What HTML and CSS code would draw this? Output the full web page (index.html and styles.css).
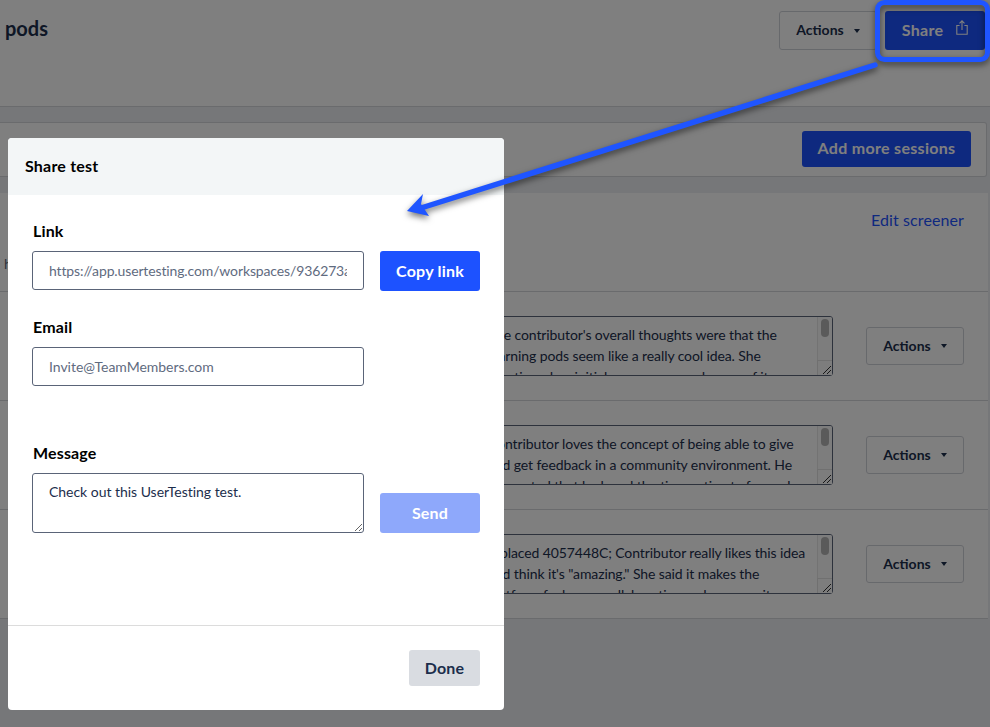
FILE: index.html
```html
<!DOCTYPE html>
<html lang="en">
<head>
<meta charset="utf-8">
<title>Share test</title>
<link rel="stylesheet" href="styles.css">
</head>
<body>
<div class="page">
  <header class="topbar">
    <h1 class="title">pods</h1>
    <div class="top-actions">
      <button class="btn btn-outline btn-actions-top">Actions <span class="caret"></span></button>
      <button class="btn btn-primary btn-share">Share
        <svg class="share-icon" viewBox="0 0 12 15" width="12" height="15" fill="none" stroke="currentColor" stroke-width="1.1"><path d="M3.6 5.5H.8v8.7h10.4V5.5H8.4"/><path d="M6 10V1M3.5 3.4 6 .9l2.5 2.5"/></svg>
      </button>
    </div>
  </header>
  <section class="card">
    <button class="btn btn-primary btn-add">Add more sessions</button>
  </section>
  <section class="panel">
    <div class="panel-head">
      <span class="stub">h</span>
      <a class="edit-link">Edit screener</a>
    </div>
    <div class="row">
      <div class="notes-wrap">
        <textarea class="notes" readonly>The contributor's overall thoughts were that the
learning pods seem like a really cool idea. She
mentioned an initial concern around some of it</textarea>
        <div class="scrollbar"><span class="thumb"></span><span class="corner"><svg viewBox="0 0 15 15" width="15" height="15" fill="none" stroke="#333" stroke-width="1"><path d="M6 14 14 6M10 14l4-4"/></svg></span></div>
      </div>
      <button class="btn btn-outline btn-actions">Actions <span class="caret"></span></button>
    </div>
    <div class="row">
      <div class="notes-wrap">
        <textarea class="notes" readonly>Contributor loves the concept of being able to give
and get feedback in a community environment. He
also noted that he loved the time estimate for each</textarea>
        <div class="scrollbar"><span class="thumb"></span><span class="corner"><svg viewBox="0 0 15 15" width="15" height="15" fill="none" stroke="#333" stroke-width="1"><path d="M6 14 14 6M10 14l4-4"/></svg></span></div>
      </div>
      <button class="btn btn-outline btn-actions">Actions <span class="caret"></span></button>
    </div>
    <div class="row">
      <div class="notes-wrap">
        <textarea class="notes" readonly>replaced 4057448C; Contributor really likes this idea
and think it's "amazing." She said it makes the
platform feel more collaborative and community</textarea>
        <div class="scrollbar"><span class="thumb"></span><span class="corner"><svg viewBox="0 0 15 15" width="15" height="15" fill="none" stroke="#333" stroke-width="1"><path d="M6 14 14 6M10 14l4-4"/></svg></span></div>
      </div>
      <button class="btn btn-outline btn-actions">Actions <span class="caret"></span></button>
    </div>
  </section>
</div>

<div class="scrim"></div>

<div class="modal">
  <div class="modal-head">Share test</div>
  <div class="modal-body">
    <label class="label">Link</label>
    <div class="field-row">
      <input class="input input-link" type="text" value="https://app.usertesting.com/workspaces/936273a4c1d8e9f0/sessions">
      <button class="btn btn-primary btn-side">Copy link</button>
    </div>
    <label class="label label-email">Email</label>
    <input class="input" type="text" placeholder="Invite@TeamMembers.com">
    <label class="label label-message">Message</label>
    <div class="field-row field-row-end">
      <textarea class="input message">Check out this UserTesting test.</textarea>
      <button class="btn btn-side btn-disabled">Send</button>
    </div>
  </div>
  <div class="modal-foot">
    <button class="btn btn-done">Done</button>
  </div>
</div>

<svg class="annotation" viewBox="0 0 990 727" width="990" height="727">
  <rect x="877.5" y="2.5" width="110" height="57" rx="7" fill="none" stroke="#1f55ff" stroke-width="5"/>
  <path d="M875 65 421 208" fill="none" stroke="#1f55ff" stroke-width="5.5" stroke-linecap="round"/>
  <path d="M407 211 423 194 421 204 429 216Z" fill="#1f55ff"/>
</svg>
</body>
</html>
```
FILE: styles.css
```css
* { box-sizing: border-box; }
html, body { margin: 0; height: 727px; overflow: hidden; }
body {
  position: relative;
  font-family: "Lato", "Open Sans", Arial, sans-serif;
  color: #1c2e4c;
  background: #eceef2;
}
.page { width: 990px; height: 727px; }
.topbar {
  height: 107px;
  background: #fff;
  border-bottom: 1px solid #d4d6da;
  display: flex;
  justify-content: space-between;
  align-items: flex-start;
  padding: 11px 5px 0;
}
.title { margin: 4px 0 0; font-size: 20px; line-height: 26px; font-weight: 700; color: #1c2e4c; }
.top-actions { display: flex; gap: 8px; }
.btn {
  font-family: inherit;
  font-weight: 700;
  border-radius: 3px;
  border: 1px solid transparent;
  display: inline-flex;
  align-items: center;
  justify-content: center;
  padding: 0 0 2px;
  letter-spacing: .2px;
  cursor: pointer;
}
.btn-outline { background: #fff; border-color: #cfd2d8; color: #1c2e4c; font-size: 14px; gap: 10px; letter-spacing: 0; }
.btn-primary { background: #1d52ff; color: #fff; font-size: 16px; }
.btn-actions-top { width: 98px; height: 39px; }
.btn-share { width: 100px; height: 39px; gap: 13px; letter-spacing: .3px; }
.share-icon { margin-top: -4px; }
.caret { width: 0; height: 0; margin-top: 2px; border: 3px solid transparent; border-top: 4px solid #1c2e4c; border-bottom: 0; }
.card {
  height: 55px;
  margin: 15px 3px 16px 0;
  background: #fff;
  border: 1px solid #d4d6da;
  border-left: 0;
  border-radius: 0 3px 3px 0;
  display: flex;
  justify-content: flex-end;
  align-items: center;
  padding: 0 15px 1px 0;
}
.btn-add { width: 169px; height: 36px; padding-bottom: 3px; letter-spacing: .3px; }
.panel { width: 988px; background: #fff; }
.panel-head {
  height: 99px;
  border-bottom: 1px solid #d4d6da;
  display: flex;
  justify-content: space-between;
  padding: 17px 24px 0 4px;
}
.stub { font-size: 14px; margin-top: 45px; color: #5a6478; }
.edit-link { color: #1d52ff; font-size: 16px; line-height: 20px; letter-spacing: .1px; }
.row {
  height: 109px;
  border-bottom: 1px solid #d4d6da;
  display: flex;
  justify-content: flex-end;
  align-items: center;
  gap: 33px;
  padding-right: 24px;
}
.notes-wrap { position: relative; width: 362px; height: 60px; }
.notes {
  display: block;
  width: 362px;
  height: 60px;
  padding: 7px 16px;
  font-family: inherit;
  font-size: 14px;
  line-height: 21px;
  letter-spacing: -.1px;
  color: #1c2e4c;
  border: 1px solid #5a6478;
  border-radius: 3px;
  overflow: hidden;
  white-space: pre;
  resize: none;
  outline: none;
}
.scrollbar {
  position: absolute;
  top: 1px;
  right: 1px;
  bottom: 1px;
  width: 15px;
  background: #fafafa;
  border-left: 1px solid #e6e6e6;
  border-radius: 0 2px 2px 0;
}
.thumb {
  position: absolute;
  left: 3px;
  top: 2px;
  width: 8px;
  height: 18px;
  border-radius: 4px;
  background: #b4b4b4;
}
.corner {
  position: absolute;
  left: -1px;
  bottom: 0;
  width: 15px;
  height: 15px;
  background: #fafafa;
  border-top: 1px solid #e0e0e0;
  border-left: 1px solid #e0e0e0;
  display: block;
  overflow: hidden;
}
.corner svg { display: block; margin: -1px 0 0 -1px; }
.btn-actions { width: 98px; height: 38px; }
.scrim { position: absolute; inset: 0; background: rgba(0, 0, 0, .5); }
.modal {
  position: absolute;
  left: 8px;
  top: 138px;
  width: 496px;
  height: 572px;
  background: #fff;
  border-radius: 4px;
  overflow: hidden;
  display: flex;
  flex-direction: column;
}
.modal-head {
  height: 57px;
  background: #f3f6f7;
  color: #000;
  font-weight: 700;
  font-size: 16px;
  line-height: 55px;
  letter-spacing: .2px;
  padding-left: 17px;
  flex: none;
}
.modal-body { flex: 1; padding: 26px 24px 0; display: flex; flex-direction: column; align-items: flex-start; }
.label { display: block; margin: 0 0 10px 1px; color: #000; font-weight: 700; font-size: 16px; line-height: 20px; letter-spacing: .15px; }
.label-email { margin-top: 26px; }
.label-message { margin-top: 57px; }
.field-row { display: flex; gap: 16px; width: 100%; }
.field-row-end { align-items: flex-end; }
.input {
  display: block;
  width: 332px;
  height: 39px;
  border: 1px solid #5a6478;
  border-radius: 3px;
  padding: 0 16px;
  font-family: inherit;
  font-size: 14px;
  letter-spacing: -.03px;
  color: #5f6b80;
  background: #fff;
  outline: none;
}
.input-link { letter-spacing: -.13px; }
.input::placeholder { color: #5f6b80; opacity: 1; }
.message { height: 60px; padding: 7px 16px; line-height: 21px; color: #1c2e4c; resize: both; }
.btn-side { width: 100px; height: 40px; font-size: 16px; }
.btn-disabled { background: #8ea8fb; color: #fff; }
.modal-foot {
  height: 85px;
  flex: none;
  border-top: 1px solid #dcdcdc;
  display: flex;
  justify-content: flex-end;
  align-items: flex-start;
  padding: 24px 24px 0 0;
}
.btn-done { width: 71px; height: 36px; background: #d9dce1; color: #1c2e4c; font-size: 16px; }
.annotation {
  position: absolute;
  left: 0;
  top: 0;
  pointer-events: none;
  filter: drop-shadow(0 3px 3px rgba(0, 0, 0, .55));
}
```
